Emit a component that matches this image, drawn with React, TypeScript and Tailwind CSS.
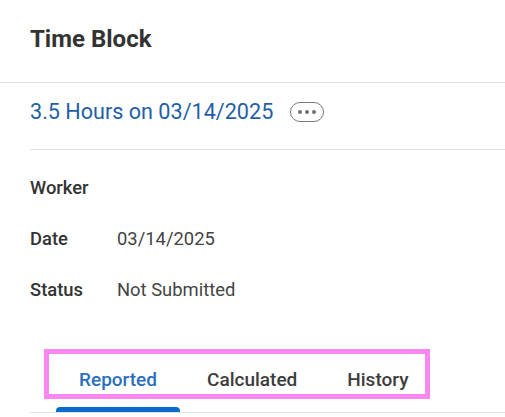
const fields = [
  { label: "Worker", value: "" },
  { label: "Date", value: "03/14/2025" },
  { label: "Status", value: "Not Submitted" },
];

const tabs = ["Reported", "Calculated", "History"];

const MoreButton = () => (
  <button className="ml-[17px] flex h-[20px] w-[34px] items-center justify-center gap-[3px] rounded-full border border-[#7a7a7a] bg-white">
    <span className="h-[4px] w-[4px] rounded-full bg-[#707070]" />
    <span className="h-[4px] w-[4px] rounded-full bg-[#707070]" />
    <span className="h-[4px] w-[4px] rounded-full bg-[#707070]" />
  </button>
);

export default function App() {
  return (
    <div className="h-[417px] w-[505px] overflow-hidden bg-white font-['Roboto',sans-serif] text-[#333]">
      <div className="h-[83px] border-b border-[#e2e2e2] px-[30px] pt-[24px]">
        <h1 className="text-[24px] font-bold leading-[30px] text-[#333]">Time Block</h1>
      </div>

      <div className="pl-[30px]">
        <div className="flex h-[67px] items-center border-b border-[#e2e2e2] pb-[8px]">
          <span className="text-[21.6px] leading-[28px] text-[#1f5fa5]">3.5 Hours on 03/14/2025</span>
          <MoreButton />
        </div>

        <div className="flex flex-col gap-[27px] pt-[26px]">
          {fields.map((f) => (
            <div key={f.label} className="flex h-[24px] items-center text-[18.4px] leading-[24px]">
              <span className="w-[87px] font-medium text-[#333]">{f.label}</span>
              <span className="text-[#444]">{f.value}</span>
            </div>
          ))}
        </div>

        <div className="relative mt-[37px] border-b border-[#e2e2e2] pl-[26px]">
          <div className="flex gap-[4px]">
            {tabs.map((t, i) => (
              <div key={t} className="flex flex-col items-center px-[23px] pt-[29px]">
                <span
                  className={
                    i === 0
                      ? "text-[19px] font-medium leading-[24px] text-[#2a6fbd]"
                      : "text-[19px] font-medium leading-[24px] text-[#3d3d3d]"
                  }
                >
                  {t}
                </span>
                <div
                  className={
                    i === 0
                      ? "mt-[15px] h-[5px] w-[calc(100%+46px)] rounded-t-[4px] bg-[#0b6bcb]"
                      : "mt-[15px] h-[5px] w-full"
                  }
                />
              </div>
            ))}
          </div>
          <div className="absolute left-[14px] top-[10px] h-[50px] w-[386px] border-[5px] border-[#fa86f2]" />
        </div>
      </div>
    </div>
  );
}
